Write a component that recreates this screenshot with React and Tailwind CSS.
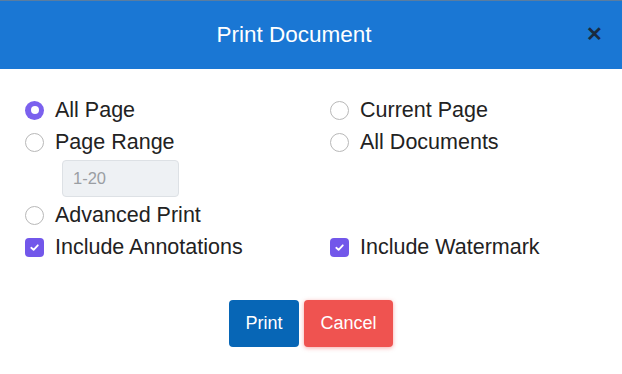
import React from "react";

function Radio({ checked, label }) {
  return (
    <div className="flex items-center h-[32px]">
      {checked ? (
        <span className="w-[19px] h-[19px] rounded-full bg-[#7b61ee] flex items-center justify-center">
          <span className="w-[8px] h-[8px] rounded-full bg-white" />
        </span>
      ) : (
        <span className="w-[19px] h-[19px] rounded-full border border-[#b8b8b8] bg-white" />
      )}
      <span className="ml-[11px] text-[21.5px] text-[#222]">{label}</span>
    </div>
  );
}

function Check({ label }) {
  return (
    <div className="flex items-center h-[32px]">
      <span className="w-[19px] h-[19px] rounded-[4px] bg-[#7257ea] flex items-center justify-center">
        <svg width="11" height="11" viewBox="0 0 12 12">
          <path d="M2.5 6.3 L5 8.6 L9.6 3.6" stroke="white" strokeWidth="2" fill="none" strokeLinecap="round" strokeLinejoin="round" />
        </svg>
      </span>
      <span className="ml-[11px] text-[21.5px] text-[#222]">{label}</span>
    </div>
  );
}

export default function App() {
  return (
    <div className="w-[622px] h-[374px] bg-white flex flex-col" style={{ fontFamily: '"Liberation Sans", Arial, sans-serif' }}>
      <div className="h-[69px] bg-[#1a77d4] border-t border-[#5a7da0] relative flex items-center justify-center pr-[34px]">
        <span className="text-white text-[22.5px]">Print Document</span>
        <span className="absolute right-[19px] top-[23px] text-[#1a2a40] text-[20px] font-bold leading-none">✕</span>
      </div>
      <div className="grid grid-cols-[305px_1fr] pl-[25px] pt-[25px]">
        <div className="flex flex-col">
          <Radio checked label="All Page" />
          <Radio label="Page Range" />
          <div className="pl-[37px] py-[2px]">
            <div className="w-[117px] h-[37px] rounded-[4px] border border-[#dde1e5] bg-[#eef1f4] flex items-center pl-[10px] text-[16.5px] text-[#9a9ea3]">
              1-20
            </div>
          </div>
          <Radio label="Advanced Print" />
          <Check label="Include Annotations" />
        </div>
        <div className="flex flex-col">
          <Radio label="Current Page" />
          <Radio label="All Documents" />
          <div className="h-[41px]" />
          <div className="h-[32px]" />
          <Check label="Include Watermark" />
        </div>
      </div>
      <div className="flex justify-center gap-[5px] mt-[37px]">
        <button className="w-[70px] h-[47px] rounded-[4px] bg-[#0766b6] text-white text-[18px]">Print</button>
        <button className="w-[89px] h-[47px] rounded-[4px] bg-[#ef5350] text-white text-[18px] shadow-[0_1px_4px_rgba(239,83,80,0.5)]">Cancel</button>
      </div>
    </div>
  );
}
